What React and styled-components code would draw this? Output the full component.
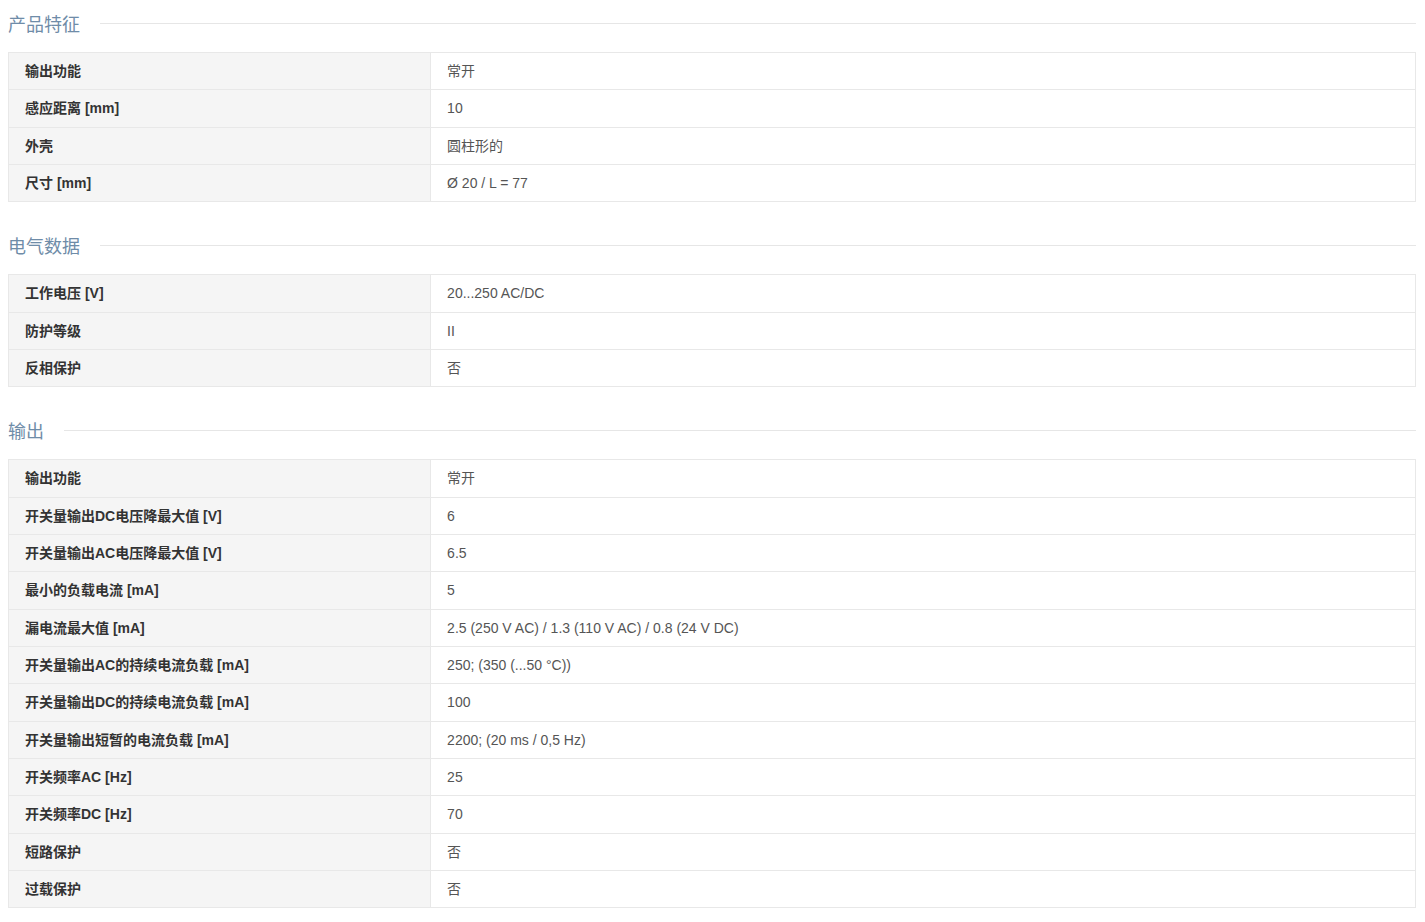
import React from "react"
import styled, { createGlobalStyle } from "styled-components"

const sections = [
  {
    title: "产品特征",
    rows: [
      ["输出功能", "常开"],
      ["感应距离 [mm]", "10"],
      ["外壳", "圆柱形的"],
      ["尺寸 [mm]", "Ø 20 / L = 77"],
    ],
  },
  {
    title: "电气数据",
    rows: [
      ["工作电压 [V]", "20...250 AC/DC"],
      ["防护等级", "II"],
      ["反相保护", "否"],
    ],
  },
  {
    title: "输出",
    rows: [
      ["输出功能", "常开"],
      ["开关量输出DC电压降最大值 [V]", "6"],
      ["开关量输出AC电压降最大值 [V]", "6.5"],
      ["最小的负载电流 [mA]", "5"],
      ["漏电流最大值 [mA]", "2.5 (250 V AC) / 1.3 (110 V AC) / 0.8 (24 V DC)"],
      ["开关量输出AC的持续电流负载 [mA]", "250; (350 (...50 °C))"],
      ["开关量输出DC的持续电流负载 [mA]", "100"],
      ["开关量输出短暂的电流负载 [mA]", "2200; (20 ms / 0,5 Hz)"],
      ["开关频率AC [Hz]", "25"],
      ["开关频率DC [Hz]", "70"],
      ["短路保护", "否"],
      ["过载保护", "否"],
    ],
  },
]

export default function App() {
  return (
    <>
      <GlobalStyle />
      <Page>
        {sections.map((s) => (
          <Section key={s.title}>
            <Heading>
              <HeadingText>{s.title}</HeadingText>
              <HeadingLine />
            </Heading>
            <Table>
              <tbody>
                {s.rows.map(([k, v], i) => (
                  <tr key={i}>
                    <Label>{k}</Label>
                    <Value>{v}</Value>
                  </tr>
                ))}
              </tbody>
            </Table>
          </Section>
        ))}
      </Page>
    </>
  )
}

const GlobalStyle = createGlobalStyle`
  body {
    margin: 0;
    background: #fff;
    font-family: "Liberation Sans", Arial, "Noto Sans CJK SC", sans-serif;
  }
`

const Page = styled.div`
  padding: 0 9px 0 8px;
`

const Section = styled.div`
  margin-bottom: 20px;
`

const Heading = styled.div`
  display: flex;
  align-items: center;
  gap: 20px;
  height: 48px;
  margin-bottom: 4px;
`

const HeadingText = styled.h3`
  margin: 0;
  padding-top: 2px;
  font-size: 18px;
  font-weight: normal;
  color: #6f8ca8;
  font-family: "Liberation Sans", "Noto Sans CJK SC", sans-serif;
  line-height: 1;
`

const HeadingLine = styled.div`
  flex: 1;
  height: 1px;
  background: #e6e6e6;
  margin-top: -2px;
`

const Table = styled.table`
  width: 100%;
  border-collapse: collapse;
  border: 1px solid #e8e8e8;
  font-size: 14px;
`

const Label = styled.td`
  width: 30%;
  background: #f5f5f5;
  border: 1px solid #e8e8e8;
  padding: 8px 16px;
  line-height: 20.33px;
  font-weight: bold;
  color: #333;
`

const Value = styled.td`
  border: 1px solid #e8e8e8;
  padding: 8px 16px;
  line-height: 20.33px;
  color: #555;
`
